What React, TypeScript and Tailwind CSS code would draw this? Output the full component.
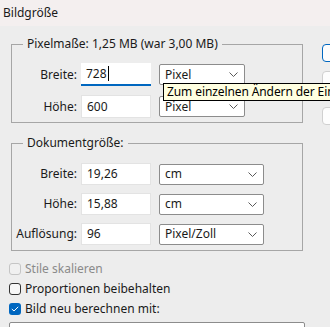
import React from "react";

const Chevron = () => (
  <svg width="9" height="5" viewBox="0 0 9 5" className="shrink-0">
    <path d="M0.5 0.5 L4.5 4.5 L8.5 0.5" fill="none" stroke="#5a5a5a" strokeWidth="1" />
  </svg>
);

const Select: React.FC<{ value: string; className: string }> = ({ value, className }) => (
  <div
    className={`flex h-[21px] items-center justify-between rounded-[2px] border border-[#8c8c8c] bg-white pl-[5px] pr-[6px] ${className}`}
  >
    <span>{value}</span>
    <Chevron />
  </div>
);

const Field: React.FC<{ value: string; focused?: boolean }> = ({ value, focused }) => (
  <div
    className={`flex h-full w-[70px] items-center bg-white pl-[5px] ${
      focused ? "border-b-2 border-[#0067c0]" : "border border-[#e3e3e3]"
    }`}
  >
    <span>{value}</span>
    {focused && <span className="ml-[1px] h-[15px] w-px bg-black" />}
  </div>
);

const Row: React.FC<{
  label: string;
  value: string;
  unit: string;
  selectClass: string;
  height: string;
  focused?: boolean;
}> = ({ label, value, unit, selectClass, height, focused }) => (
  <div className={`flex items-center ${height}`}>
    <div className="w-[65px] text-right">{label}</div>
    <div className="ml-[4px] h-full">
      <Field value={value} focused={focused} />
    </div>
    <Select value={unit} className={`ml-[8px] ${selectClass}`} />
  </div>
);

const Check: React.FC<{ label: string; state: "disabled" | "off" | "on" }> = ({ label, state }) => (
  <div className="flex h-[20px] items-center">
    {state === "on" ? (
      <div className="flex h-[12px] w-[12px] items-center justify-center rounded-[3px] bg-[#0067c0]">
        <svg width="8" height="6" viewBox="0 0 8 6">
          <path d="M0.8 3 L3 5 L7.2 0.8" fill="none" stroke="#fff" strokeWidth="1" />
        </svg>
      </div>
    ) : (
      <div
        className={`h-[12px] w-[12px] rounded-[3px] border ${
          state === "disabled" ? "border-[#c5c5c5] bg-[#f0f0f0]" : "border-[#333] bg-[#f7f7f7]"
        }`}
      />
    )}
    <span className={`ml-[4px] ${state === "disabled" ? "text-[#8a8a8a]" : ""}`}>{label}</span>
  </div>
);

export default function App() {
  return (
    <div className="relative h-[327px] w-[330px] overflow-hidden bg-[#ededed] font-['Noto_Sans',sans-serif] text-[12px] leading-[16px] text-[#1a1a1a]">
      {/* Title bar */}
      <div className="flex h-[26px] items-center bg-[#f4efef] pl-[3px]">Bildgröße</div>

      <div className="flex">
        <div className="w-[322px] shrink-0 pl-[9px]">
          {/* Pixelmaße */}
          <fieldset className="ml-[2px] mt-[10px] w-[292px] border border-[#a6a6a6] pb-[4px]">
            <legend className="ml-[11px] px-[4px]">Pixelmaße: 1,25 MB (war 3,00 MB)</legend>
            <div className="mt-[11px] flex flex-col gap-[9px]">
              <Row label="Breite:" value="728" unit="Pixel" selectClass="w-[86px]" height="h-[23px]" focused />
              <Row label="Höhe:" value="600" unit="Pixel" selectClass="w-[86px]" height="h-[23px]" />
            </div>
          </fieldset>

          {/* Dokumentgröße */}
          <fieldset className="ml-[2px] mt-[12px] w-[292px] border border-[#a6a6a6] pb-[5px]">
            <legend className="ml-[11px] px-[4px]">Dokumentgröße:</legend>
            <div className="mt-[12px] flex flex-col gap-[8px]">
              <Row label="Breite:" value="19,26" unit="cm" selectClass="w-[105px]" height="h-[22px]" />
              <Row label="Höhe:" value="15,88" unit="cm" selectClass="w-[105px]" height="h-[22px]" />
              <Row label="Auflösung:" value="96" unit="Pixel/Zoll" selectClass="w-[105px]" height="h-[22px]" />
            </div>
          </fieldset>

          <div className="mt-[8px]">
            <Check label="Stile skalieren" state="disabled" />
            <Check label="Proportionen beibehalten" state="off" />
            <Check label="Bild neu berechnen mit:" state="on" />
          </div>

          <div className="mt-[3px] h-[22px] w-[296px] rounded-[2px] border border-[#8c8c8c] bg-white" />
        </div>

        {/* Buttons (cut off at the right edge) */}
        <div className="flex flex-col pt-[18px]">
          <div className="h-[18px] w-[80px] rounded-[4px] border border-[#0067c0] bg-[#fdfdfd]" />
          <div className="mt-[9px] h-[18px] w-[80px] rounded-[4px] border border-[#d0d0d0] bg-[#fdfdfd]" />
          <div className="mt-[18px] h-[18px] w-[80px] rounded-[4px] border border-[#d0d0d0] bg-[#fdfdfd]" />
        </div>
      </div>

      {/* Tooltip */}
      <div className="absolute left-[163px] top-[83px] flex h-[18px] items-center whitespace-nowrap border border-black bg-[#ffffe1] px-[3px] tracking-[-0.1px] text-black">
        Zum einzelnen Ändern der Einheiten
      </div>
    </div>
  );
}
